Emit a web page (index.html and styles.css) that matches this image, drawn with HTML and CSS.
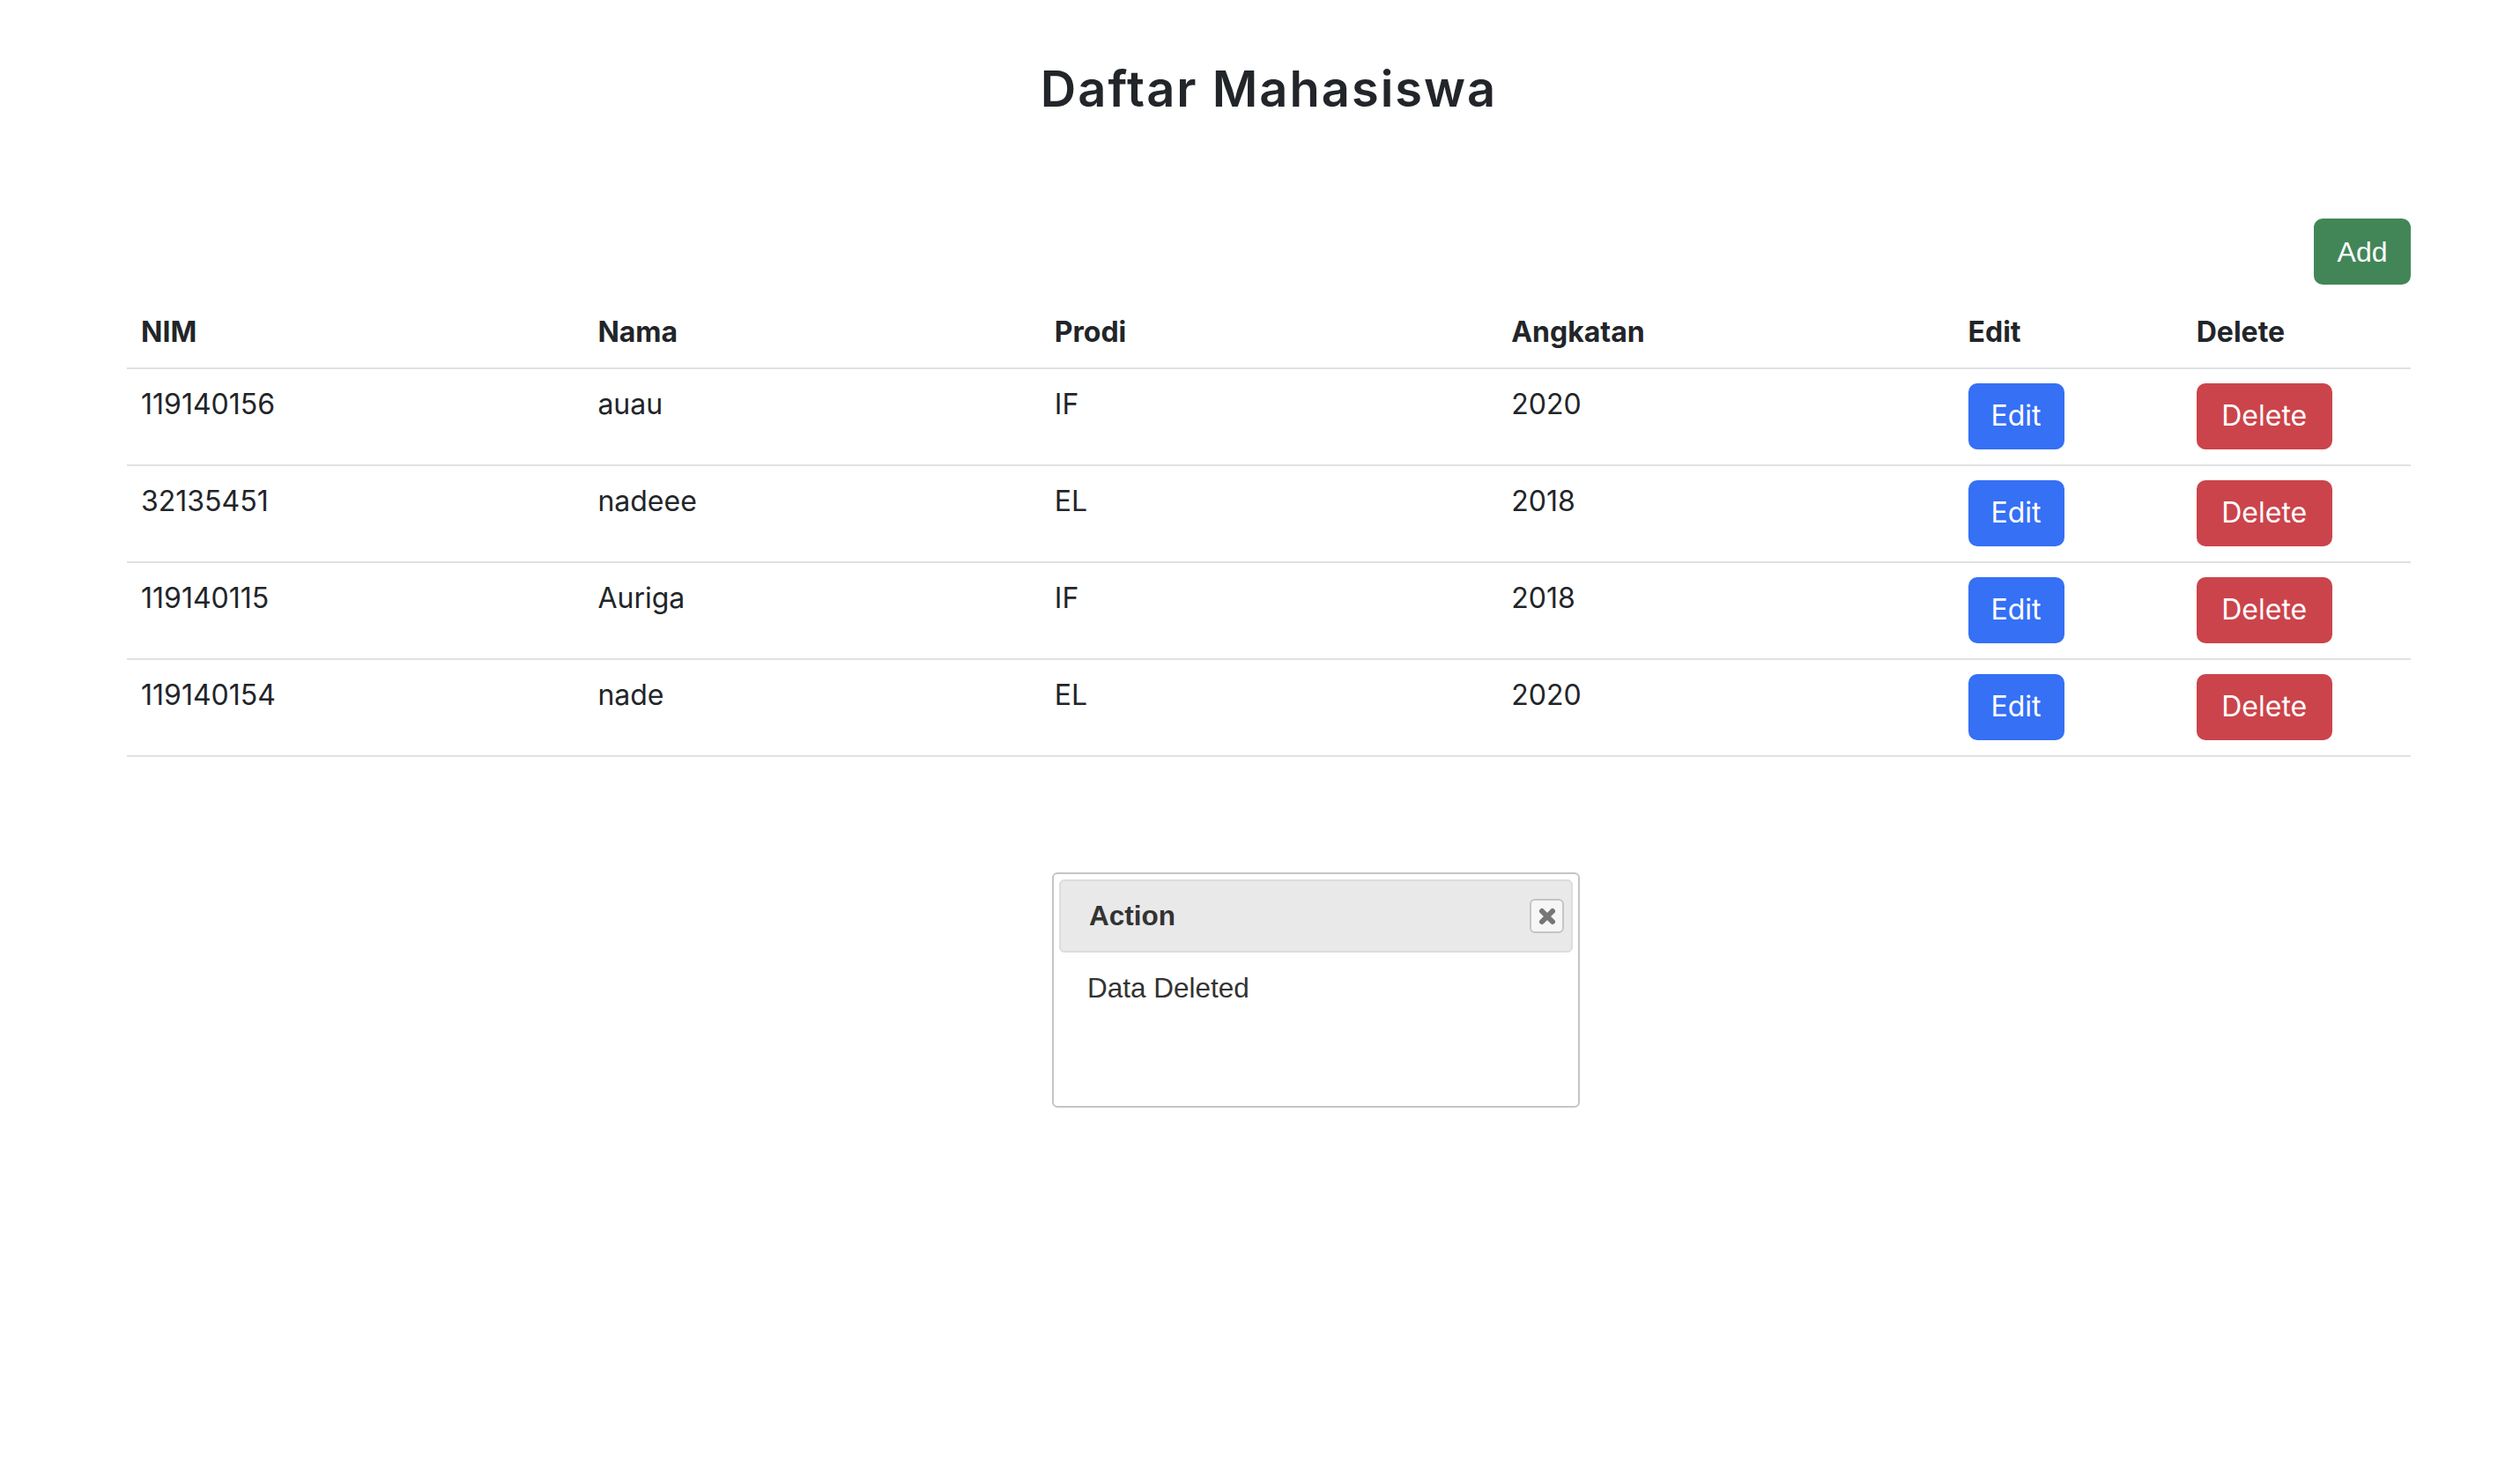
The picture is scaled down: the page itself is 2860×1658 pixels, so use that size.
FILE: index.html
```html
<!DOCTYPE html>
<html lang="id">
<head>
<meta charset="utf-8">
<title>Daftar Mahasiswa</title>
<link rel="stylesheet" href="styles.css">
</head>
<body>
<div class="container">
  <h3 class="title">Daftar Mahasiswa</h3>
  <div class="toolbar">
    <button class="btn btn-add" type="button">Add</button>
  </div>
  <table class="table">
    <colgroup>
      <col class="c-wide"><col class="c-wide"><col class="c-wide"><col class="c-wide"><col class="c-narrow"><col class="c-narrow">
    </colgroup>
    <thead>
      <tr><th>NIM</th><th>Nama</th><th>Prodi</th><th>Angkatan</th><th>Edit</th><th>Delete</th></tr>
    </thead>
    <tbody>
      <tr><td>119140156</td><td>auau</td><td>IF</td><td>2020</td><td><a class="btn btn-edit" href="#">Edit</a></td><td><a class="btn btn-delete" href="#">Delete</a></td></tr>
      <tr><td>32135451</td><td>nadeee</td><td>EL</td><td>2018</td><td><a class="btn btn-edit" href="#">Edit</a></td><td><a class="btn btn-delete" href="#">Delete</a></td></tr>
      <tr><td>119140115</td><td>Auriga</td><td>IF</td><td>2018</td><td><a class="btn btn-edit" href="#">Edit</a></td><td><a class="btn btn-delete" href="#">Delete</a></td></tr>
      <tr><td>119140154</td><td>nade</td><td>EL</td><td>2020</td><td><a class="btn btn-edit" href="#">Edit</a></td><td><a class="btn btn-delete" href="#">Delete</a></td></tr>
    </tbody>
  </table>
</div>

<div class="dialog">
  <div class="dialog-titlebar">
    <span class="dialog-title">Action</span>
    <button class="dialog-close" type="button" aria-label="Close">
      <svg width="22" height="22" viewBox="0 0 22 22"><path d="M5 5 L17 17 M17 5 L5 17" stroke="#767676" stroke-width="6" stroke-linecap="round"/></svg>
    </button>
  </div>
  <div class="dialog-content">Data Deleted</div>
</div>
</body>
</html>
```

FILE: styles.css
```css
html, body {
  margin: 0;
  padding: 0;
  background: #ffffff;
}

body {
  font-family: "Inter", "Noto Sans", sans-serif;
  color: #222529;
  font-size: 32px;
  line-height: 48px;
  height: 1658px;
  overflow: hidden;
  position: relative;
}

.container {
  width: 2592px;
  margin-left: 144px;
}

.title {
  margin: 68px 0 0;
  text-align: center;
  font-size: 56px;
  line-height: 67px;
  font-weight: 600;
  letter-spacing: 2px;
}

.toolbar {
  display: flex;
  justify-content: flex-end;
  padding-top: 113px;
  margin-bottom: 14px;
}

.btn {
  display: inline-block;
  box-sizing: border-box;
  border: 2px solid transparent;
  border-radius: 10px;
  color: #ffffff;
  text-decoration: none;
  text-align: center;
  font-size: 32px;
  line-height: 48px;
  padding: 12px 0;
  vertical-align: top;
}

.btn-add {
  font-family: "Liberation Sans", Arial, sans-serif;
  background: #428658;
  border-color: #428658;
  width: 110px;
  height: 75px;
  padding: 11px 0;
  cursor: pointer;
}

.btn-edit {
  background: #3570f5;
  border-color: #3570f5;
  width: 109px;
  height: 75px;
  padding: 11px 0;
}

.btn-delete {
  background: #cb444b;
  border-color: #cb444b;
  width: 154px;
  height: 75px;
  padding: 11px 0;
}

.table {
  width: 100%;
  border-collapse: collapse;
  table-layout: fixed;
}

.c-wide { width: 20%; }
.c-narrow { width: 10%; }

.table th,
.table td {
  text-align: left;
  vertical-align: top;
  padding: 16px;
  border-bottom: 2px solid #dee2e6;
}

.table th {
  font-weight: 700;
}

.table td {
  font-weight: 400;
  padding-bottom: 17px;
}

.dialog {
  position: absolute;
  left: 1194px;
  top: 990px;
  width: 599px;
  height: 267px;
  box-sizing: border-box;
  border: 2px solid #c5c5c5;
  border-radius: 6px;
  padding: 6px;
  background: #ffffff;
  font-family: "Liberation Sans", Arial, sans-serif;
  font-size: 31.5px;
  line-height: normal;
  color: #333333;
}

.dialog-titlebar {
  display: flex;
  align-items: center;
  height: 83px;
  box-sizing: border-box;
  padding: 0 8px 0 32px;
  background: #e9e9e9;
  border: 2px solid #dddddd;
  border-radius: 6px;
}

.dialog-title {
  flex: 1;
  font-weight: 700;
}

.dialog-close {
  width: 39px;
  height: 39px;
  box-sizing: border-box;
  padding: 0;
  border: 2px solid #c5c5c5;
  border-radius: 6px;
  background: #f6f6f6;
  display: flex;
  align-items: center;
  justify-content: center;
}

.dialog-content {
  padding: 22px 32px;
}
```
